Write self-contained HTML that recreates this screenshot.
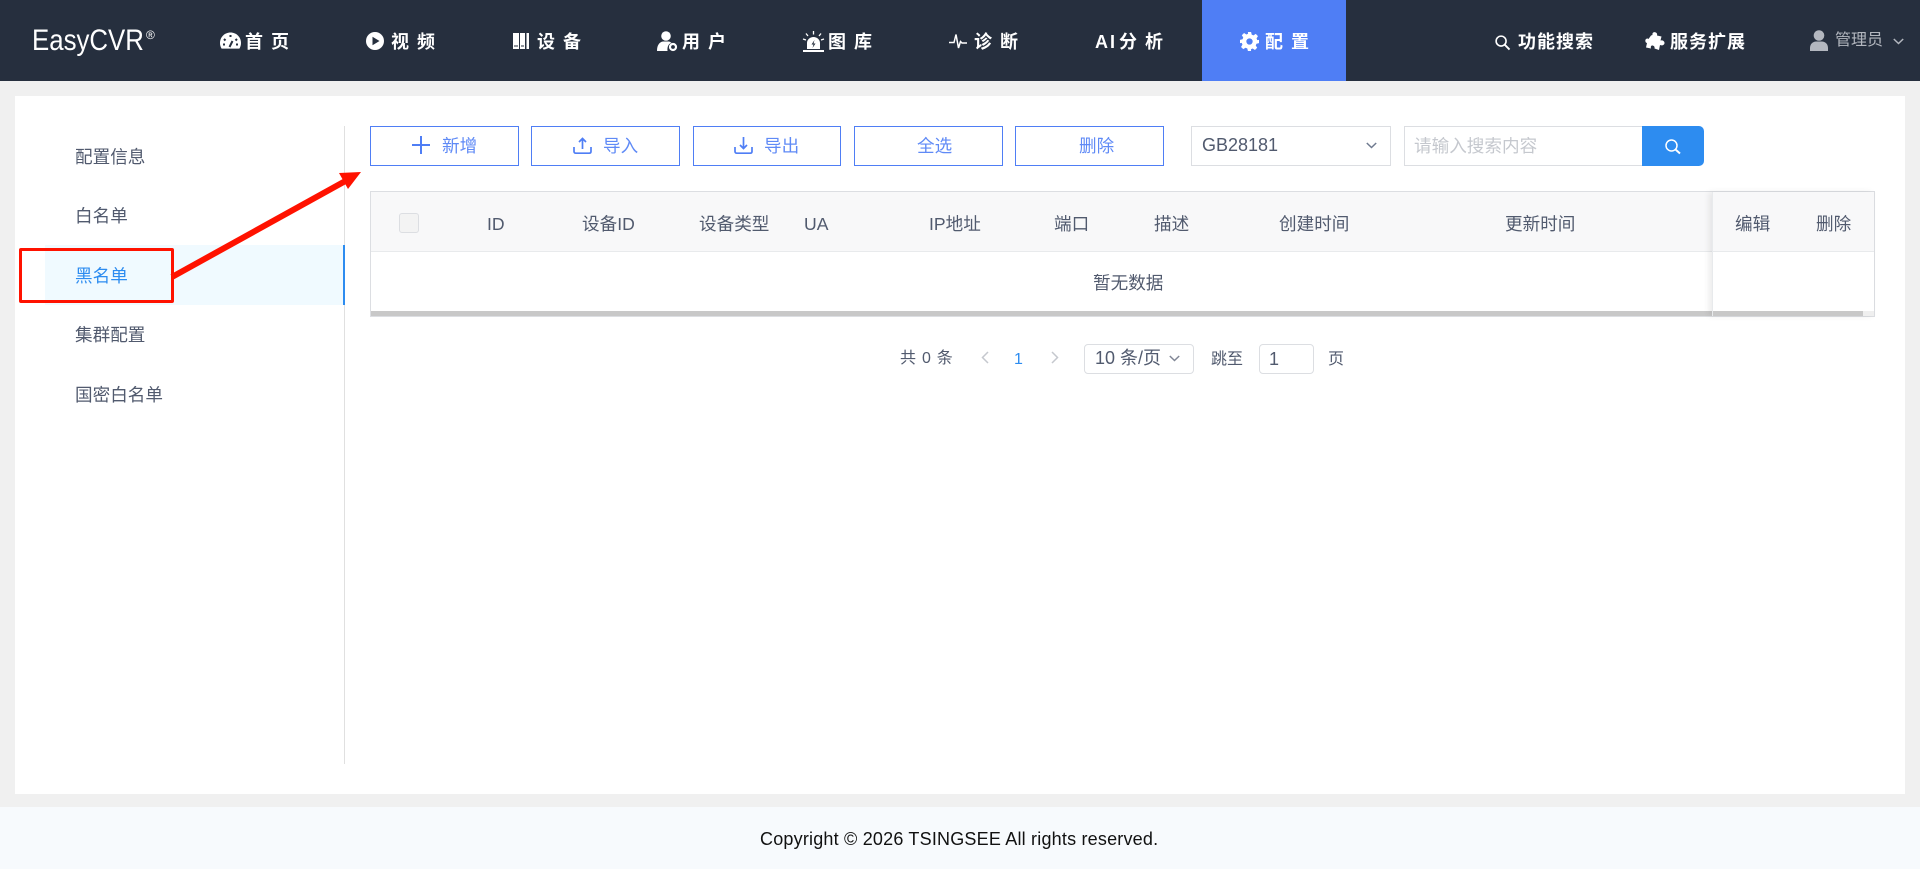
<!DOCTYPE html>
<html lang="zh"><head><meta charset="utf-8"><title>EasyCVR</title>
<style>
*{box-sizing:border-box;margin:0;padding:0}
html,body{width:1920px;height:869px;overflow:hidden;background:#f0f0f0;font-family:"Liberation Sans","Noto Sans CJK SC",sans-serif;color:#515a6e}
.a{position:absolute}
.t{position:absolute;white-space:nowrap;height:24px;line-height:24px;font-size:17.6px}
.n{color:#fff;font-weight:700;letter-spacing:8px;top:30px;font-size:18px}
.b{position:absolute;top:126px;height:40px;border:1px solid #4f7ef5;background:#fff}
.bt{color:#5f8af6;top:134px}
.h{top:212px}
.s{left:75px}
svg{position:absolute;overflow:visible}
</style></head><body>
<div class="a" style="left:0;top:0;width:1920px;height:81px;background:#262f3e"></div>
<div class="a" style="left:1202px;top:0;width:144px;height:81px;background:#4f7ef5"></div>
<div class="t" style="left:32px;top:26px;height:30px;line-height:30px;font-size:29.500px;color:#fff;transform:scaleX(.875);transform-origin:left center">EasyCVR</div>
<div class="t" style="left:146px;top:25px;height:20px;line-height:20px;font-size:12px;color:#fff">®</div>

<svg style="left:220px;top:32px" width="21" height="18" viewBox="0 0 21 18"><path fill="#fff" d="M10.500 0.500C4.500 0.500 0 5.200 0 11c0 2.200.6 4 1.600 5.600h17.800C20.400 15 21 13.200 21 11 21 5.200 16.500.5 10.500.5z"/><path stroke="#262f3e" stroke-width="2" fill="none" d="M10.500 3v2M4 7l1.500 1.500M17 7l-1.500 1.500M3 12.500h2M16 12.500h2M9.500 15l3-6"/></svg>
<div class="t n" style="left:245px">首页</div>
<svg style="left:366px;top:32px" width="18" height="18" viewBox="0 0 18 18"><circle cx="9" cy="9" r="9" fill="#fff"/><path fill="#262f3e" d="M6.500 4.800v8.400L13.500 9z"/></svg>
<div class="t n" style="left:391px">视频</div>
<svg style="left:513px;top:33px" width="16" height="16" viewBox="0 0 16 16"><path fill="#fff" d="M0 0h6v16H0zM7 0h5v16H7zM13.500 0H16v16h-2.500z"/><path stroke="#262f3e" fill="none" d="M1 13h4M8 13h3"/></svg>
<div class="t n" style="left:537px">设备</div>
<svg style="left:657px;top:31px" width="21" height="21" viewBox="0 0 21 21"><circle cx="9" cy="5" r="4.800" fill="#fff"/><path fill="#fff" d="M0 20c0-6 2.500-9 6-9.500h6c1 .3 1.800.8 2.500 1.500-2.500.5-4.500 3-4 8z"/><circle cx="16" cy="16" r="3" fill="none" stroke="#fff" stroke-width="2.200"/></svg>
<div class="t n" style="left:682px">用户</div>
<svg style="left:803px;top:31px" width="21" height="21" viewBox="0 0 21 21"><path fill="#fff" d="M4 18V12c0-3.500 3-6 6.500-6S17 8.500 17 12v6zM0 19h21v2H0z"/><path fill="#262f3e" d="M11.500 9l-3 4.500h2L9.500 17l3-4.500h-2z"/><path stroke="#fff" stroke-width="1.300" d="M10.500 0v3.500M3 2.500l2 2.500M18 2.500l-2 2.500M0 8l3 1M21 8l-3 1"/></svg>
<div class="t n" style="left:828px">图库</div>
<svg style="left:949px;top:33px" width="18" height="18" viewBox="0 0 18 18"><path fill="none" stroke="#fff" stroke-width="1.500" d="M0 9.500h5L7 1.500 9.500 15l2-6.500 1.500 1.500H18"/></svg>
<div class="t n" style="left:974px">诊断</div>
<div class="t n" style="left:1095px;letter-spacing:2px">AI</div>
<div class="t n" style="left:1119px">分析</div>
<svg style="left:1240px;top:32px" width="19" height="19" viewBox="0 0 24 24"><path fill="#fff" fill-rule="evenodd" d="M10 0h4l.8 3.300 2.200.9 2.900-1.800 2.800 2.800-1.800 2.900.9 2.200L24 10v4l-3.200.8-.9 2.200 1.800 2.900-2.800 2.800-2.900-1.800-2.200.9L14 24h-4l-.8-3.200-2.200-.9-2.900 1.800-2.800-2.800 1.800-2.900-.9-2.200L0 14v-4l3.200-.8.900-2.200-1.800-2.900 2.800-2.800 2.900 1.800 2.200-.9zM12 8a4 4 0 1 0 0 8 4 4 0 0 0 0-8z"/></svg>
<div class="t n" style="left:1265px">配置</div>

<svg style="left:1495px;top:35px" width="15" height="15" viewBox="0 0 16 16"><circle cx="6.500" cy="6.500" r="5.300" fill="none" stroke="#fff" stroke-width="1.700"/><path stroke="#fff" stroke-width="2" d="M10.500 10.500L15.500 15.500"/></svg>
<div class="t" style="left:1518px;top:30px;font-size:18px;color:#fff;font-weight:700;letter-spacing:1px">功能搜索</div>
<svg style="left:1645px;top:32px" width="20" height="19" viewBox="0 0 20 19"><path fill="#fff" d="M6 3.500l1.500-.5C7 1 8.500 0 10 .2S12.500 1.500 12 3.500l4.500 1-1 4c2-.5 4 .5 4 2.500s-2.500 3-4.500 2l-1 5-4.500-1.500c.5-2-1-3-2.300-3S5.500 15 6 16.500L1 15.500l1-4.500C.5 11 0 9 .5 7.800S2.500 6 3.500 7z"/></svg>
<div class="t" style="left:1670px;top:30px;font-size:18px;color:#fff;font-weight:700;letter-spacing:1px">服务扩展</div>
<svg style="left:1810px;top:30px" width="18" height="21" viewBox="0 0 18 21"><circle cx="9" cy="5.500" r="5.300" fill="#b3b7bf"/><path fill="#b3b7bf" d="M0 21v-3c0-4 3-6.500 6-6.500h6c3 0 6 2.500 6 6.500v3z"/></svg>
<div class="t" style="left:1835px;top:29px;color:#b3b7bf;font-size:16px">管理员</div>
<svg style="left:1893px;top:38px" width="11" height="7" viewBox="0 0 11 7"><path fill="none" stroke="#b3b7bf" stroke-width="1.500" d="M.8 1l4.700 4.500L10.200 1"/></svg>

<div class="a" style="left:15px;top:96px;width:1890px;height:698px;background:#fff"></div>
<div class="a" style="left:0;top:807px;width:1920px;height:62px;background:#f7fafd"></div>
<div class="t" style="left:760px;top:827px;font-size:18px;color:#111;letter-spacing:.2px">Copyright © 2026 TSINGSEE All rights reserved.</div>

<div class="a" style="left:344px;top:126px;width:1px;height:638px;background:#e0e0e0"></div>
<div class="a" style="left:45px;top:245px;width:300px;height:60px;background:#f0faff;border-right:2px solid #2d8cf0"></div>
<div class="t s" style="top:145px">配置信息</div>
<div class="t s" style="top:204px">白名单</div>
<div class="t s" style="top:264px;color:#2d8cf0">黑名单</div>
<div class="t s" style="top:323px">集群配置</div>
<div class="t s" style="top:383px">国密白名单</div>

<div class="b" style="left:370px;width:149px"></div>
<svg style="left:412px;top:136px" width="18" height="18" viewBox="0 0 18 18"><path stroke="#4f7ef5" stroke-width="2" d="M9 0v18M0 9h18"/></svg>
<div class="t bt" style="left:442px">新增</div>
<div class="b" style="left:531px;width:149px"></div>
<svg style="left:573px;top:137px" width="19" height="17" viewBox="0 0 19 17"><path fill="none" stroke="#4f7ef5" stroke-width="1.700" d="M1 10v4.500c0 1 .8 1.700 1.700 1.700h13.600c1 0 1.700-.7 1.700-1.700V10M9.500 12V1.500M6 5l3.500-3.500L13 5"/></svg>
<div class="t bt" style="left:603px">导入</div>
<div class="b" style="left:693px;width:148px"></div>
<svg style="left:734px;top:137px" width="19" height="17" viewBox="0 0 19 17"><path fill="none" stroke="#4f7ef5" stroke-width="1.700" d="M1 10v4.500c0 1 .8 1.700 1.700 1.700h13.600c1 0 1.700-.7 1.700-1.700V10M9.500 0v11.500M6 8l3.500 3.500L13 8"/></svg>
<div class="t bt" style="left:764px">导出</div>
<div class="b" style="left:854px;width:149px"></div>
<div class="t bt" style="left:917px">全选</div>
<div class="b" style="left:1015px;width:149px"></div>
<div class="t bt" style="left:1079px">删除</div>

<div class="a" style="left:1191px;top:126px;width:200px;height:40px;border:1px solid #dcdee2"></div>
<div class="t" style="left:1202px;top:133px;font-size:18px">GB28181</div>
<svg style="left:1366px;top:142px" width="11" height="7" viewBox="0 0 11 7"><path fill="none" stroke="#6f7a8f" stroke-width="1.500" d="M.8 1l4.700 4.500L10.200 1"/></svg>
<div class="a" style="left:1404px;top:126px;width:239px;height:40px;border:1px solid #dcdee2"></div>
<div class="t" style="left:1414px;top:134px;color:#c5c8ce">请输入搜索内容</div>
<div class="a" style="left:1642px;top:126px;width:62px;height:40px;background:#2d8cf0;border-radius:0 5px 5px 0"></div>
<svg style="left:1665px;top:139px" width="16" height="15" viewBox="0 0 16 15"><circle cx="6.500" cy="6.500" r="5.500" fill="none" stroke="#fff" stroke-width="1.500"/><path stroke="#fff" stroke-width="2" d="M10.500 10.500L15 14.500"/></svg>

<div class="a" style="left:370px;top:191px;width:1505px;height:126px;border:1px solid #dcdee2;background:#fff"></div>
<div class="a" style="left:371px;top:192px;width:1503px;height:59px;background:#f8f8f9"></div>
<div class="a" style="left:371px;top:251px;width:1503px;height:1px;background:#e8eaec"></div>
<div class="a" style="left:371px;top:311px;width:1503px;height:5px;background:#efefef"></div>
<div class="a" style="left:371px;top:311px;width:1492px;height:5px;background:#c8c8c8"></div>
<div class="a" style="left:399px;top:213px;width:20px;height:20px;background:#f3f3f3;border:1px solid #dcdee2;border-radius:3px"></div>
<div class="t h" style="left:487px">ID</div>
<div class="t h" style="left:582px">设备ID</div>
<div class="t h" style="left:699px">设备类型</div>
<div class="t h" style="left:804px">UA</div>
<div class="t h" style="left:929px">IP地址</div>
<div class="t h" style="left:1054px">端口</div>
<div class="t h" style="left:1154px">描述</div>
<div class="t h" style="left:1279px">创建时间</div>
<div class="t h" style="left:1505px">更新时间</div>
<div class="a" style="left:1712px;top:192px;width:162px;height:124px;box-shadow:-3px 0 6px rgba(0,0,0,.08);background:transparent;border-left:1px solid #e8eaec"></div>
<div class="a" style="left:1713px;top:192px;width:161px;height:59px;background:#f8f8f9"></div>
<div class="a" style="left:1713px;top:251px;width:161px;height:1px;background:#e8eaec"></div>
<div class="a" style="left:1713px;top:252px;width:161px;height:59px;background:#fff"></div>
<div class="t h" style="left:1735px">编辑</div>
<div class="t h" style="left:1816px">删除</div>
<div class="t" style="left:1093px;top:271px">暂无数据</div>

<div class="t" style="left:900px;top:347px;font-size:16px;word-spacing:1.500px">共 0 条</div>
<svg style="left:981px;top:351px" width="8" height="13" viewBox="0 0 8 13"><path fill="none" stroke="#c5c8ce" stroke-width="1.500" d="M7 1L1.500 6.500 7 12"/></svg>
<div class="t" style="left:1014px;top:348px;font-size:16px;color:#2d8cf0">1</div>
<svg style="left:1051px;top:351px" width="8" height="13" viewBox="0 0 8 13"><path fill="none" stroke="#c5c8ce" stroke-width="1.500" d="M1 1l5.500 5.500L1 12"/></svg>
<div class="a" style="left:1084px;top:344px;width:110px;height:30px;border:1px solid #dcdee2;border-radius:4px"></div>
<div class="t" style="left:1095px;top:346px;font-size:18px">10 条/页</div>
<svg style="left:1169px;top:355px" width="11" height="7" viewBox="0 0 11 7"><path fill="none" stroke="#808695" stroke-width="1.500" d="M.8 1l4.700 4.500L10.200 1"/></svg>
<div class="t" style="left:1211px;top:348px;font-size:16px">跳至</div>
<div class="a" style="left:1259px;top:344px;width:55px;height:30px;border:1px solid #dcdee2;border-radius:4px"></div>
<div class="t" style="left:1269px;top:347px;font-size:18px">1</div>
<div class="t" style="left:1328px;top:348px;font-size:16px">页</div>

<div class="a" style="left:19px;top:248px;width:155px;height:55px;border:3px solid #ff1200;border-radius:2px"></div>
<svg style="left:0;top:0" width="1920" height="869"><path stroke="#ff1200" stroke-width="6" d="M172 277L349 179"/><path fill="#ff1200" d="M361 172L339 173 348 189z"/></svg>
</body></html>
